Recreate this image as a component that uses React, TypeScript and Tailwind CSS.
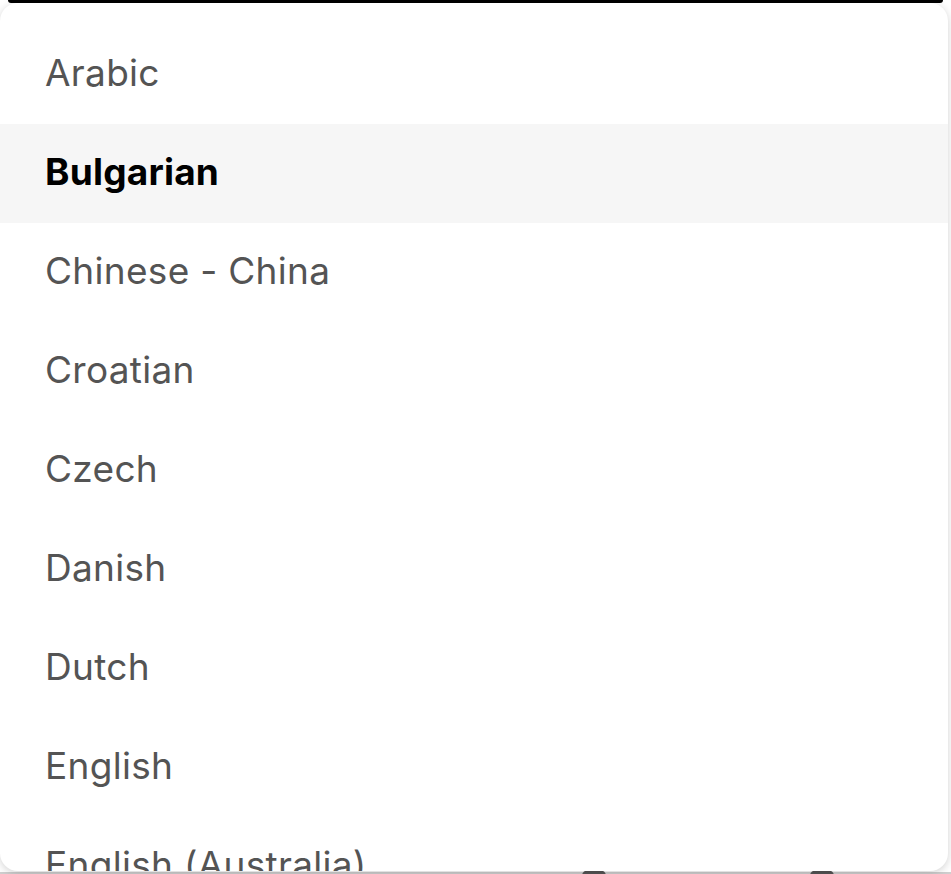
const languages = [
    "Arabic",
    "Bulgarian",
    "Chinese - China",
    "Croatian",
    "Czech",
    "Danish",
    "Dutch",
    "English",
    "English (Australia)",
    "English (Canada)",
];

export default function App() {
    const selected = "Bulgarian";

    return (
        <div className="relative h-[874px] w-[951px] overflow-hidden bg-[#cfcfcf] font-['Inter',sans-serif]">
            {/* page behind the menu */}
            <div className="absolute inset-x-0 top-0 h-[872px] bg-white" />
            <div className="absolute left-[8px] right-[8px] top-0 h-[3px] rounded-b-sm bg-black" />
            <div className="absolute left-[582px] top-[870px] h-[12px] w-[24px] rounded-full bg-[#555]" />
            <div className="absolute left-[810px] top-[870px] h-[12px] w-[24px] rounded-full bg-[#555]" />

            {/* dropdown */}
            <div className="absolute left-0 top-[3px] h-[868px] w-[948px] overflow-hidden rounded-[18px] bg-white shadow-[0_2px_8px_rgba(0,0,0,0.18)]">
                <ul className="pt-[22px]">
                    {languages.map((lang) => {
                        const active = lang === selected;
                        return (
                            <li
                                key={lang}
                                className={
                                    active
                                        ? "flex h-[99px] items-center bg-[#f6f6f6] pb-[4px] pl-[45px] text-[37px] font-bold tracking-[0.2px] text-black"
                                        : "flex h-[99px] items-center pb-[4px] pl-[45px] text-[37px] tracking-[0.3px] text-[#545454]"
                                }
                            >
                                {lang}
                            </li>
                        );
                    })}
                </ul>
            </div>
        </div>
    );
}
